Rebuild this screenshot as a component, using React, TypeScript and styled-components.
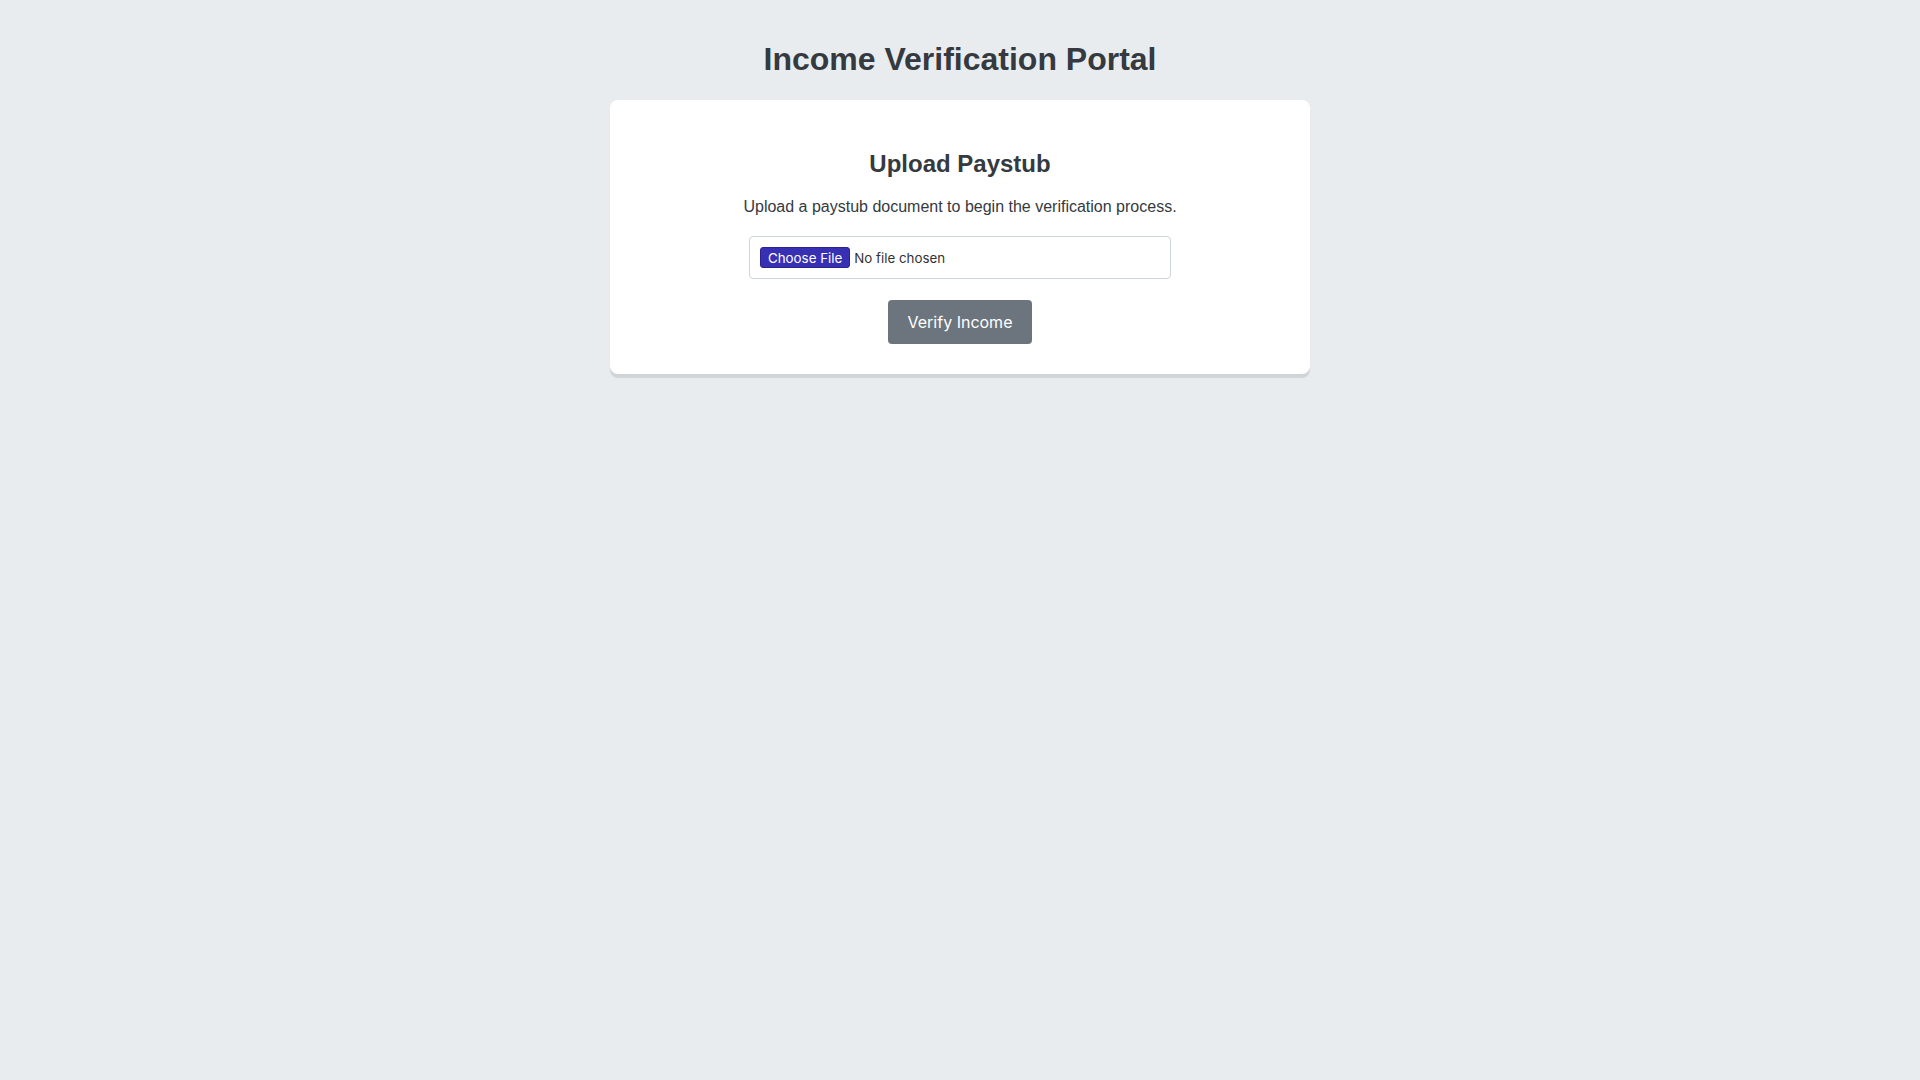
import React from 'react';
import styled, { createGlobalStyle } from 'styled-components';

const GlobalStyle = createGlobalStyle`
  * {
    box-sizing: border-box;
  }

  html, body {
    margin: 0;
    padding: 0;
    background-color: #e9ecef;
    font-family: "Liberation Sans", Arial, sans-serif;
    color: #343a40;
  }
`;

const Page = styled.div`
  min-height: 100vh;
  padding: 20px;
`;

const Container = styled.div`
  max-width: 700px;
  margin: 0 auto;
  text-align: center;
`;

const PageTitle = styled.h1`
  font-size: 32px;
  font-weight: 700;
  line-height: 37px;
  margin: 21px 0 22px;
  color: #343a40;
`;

const Card = styled.div`
  background-color: #ffffff;
  border-radius: 8px;
  padding: 30px;
  box-shadow: 0 4px 1px rgba(0, 0, 0, 0.1);
`;

const CardTitle = styled.h2`
  font-size: 24px;
  font-weight: 700;
  line-height: 28px;
  margin: 20px 0;
  color: #343a40;
`;

const Description = styled.p`
  font-size: 16px;
  line-height: 18px;
  margin: 0 0 20px;
  color: #343a40;
`;

const FileInput = styled.input`
  display: block;
  box-sizing: border-box;
  width: 422px;
  height: 43px;
  margin: 0 auto 21px;
  padding: 10px;
  border: 1px solid #ced4da;
  border-radius: 4px;
  background: #ffffff;
  font-family: Inter, "Liberation Sans", sans-serif;
  font-size: 13.33px;
  color: #333333;

  &::file-selector-button {
    font-family: Inter, "Liberation Sans", sans-serif;
    font-size: 13.33px;
    height: 21px;
    padding: 0 7px;
    margin-right: 4px;
    background-color: #3730b3;
    color: #ffffff;
    border: 1px solid #2a2490;
    border-radius: 3px;
    cursor: pointer;
  }
`;

const VerifyButton = styled.button`
  font-family: Inter, "Liberation Sans", sans-serif;
  font-size: 16px;
  line-height: 24px;
  height: 44px;
  padding: 10px 20px;
  background-color: #6c757d;
  color: #ffffff;
  border: none;
  border-radius: 4px;
  cursor: not-allowed;
`;

export default function App() {
  return (
    <Page>
      <GlobalStyle />
      <Container>
        <PageTitle>Income Verification Portal</PageTitle>
        <Card>
          <CardTitle>Upload Paystub</CardTitle>
          <Description>
            Upload a paystub document to begin the verification process.
          </Description>
          <FileInput type="file" accept=".pdf,.png,.jpg,.jpeg" />
          <VerifyButton disabled>Verify Income</VerifyButton>
        </Card>
      </Container>
    </Page>
  );
}
